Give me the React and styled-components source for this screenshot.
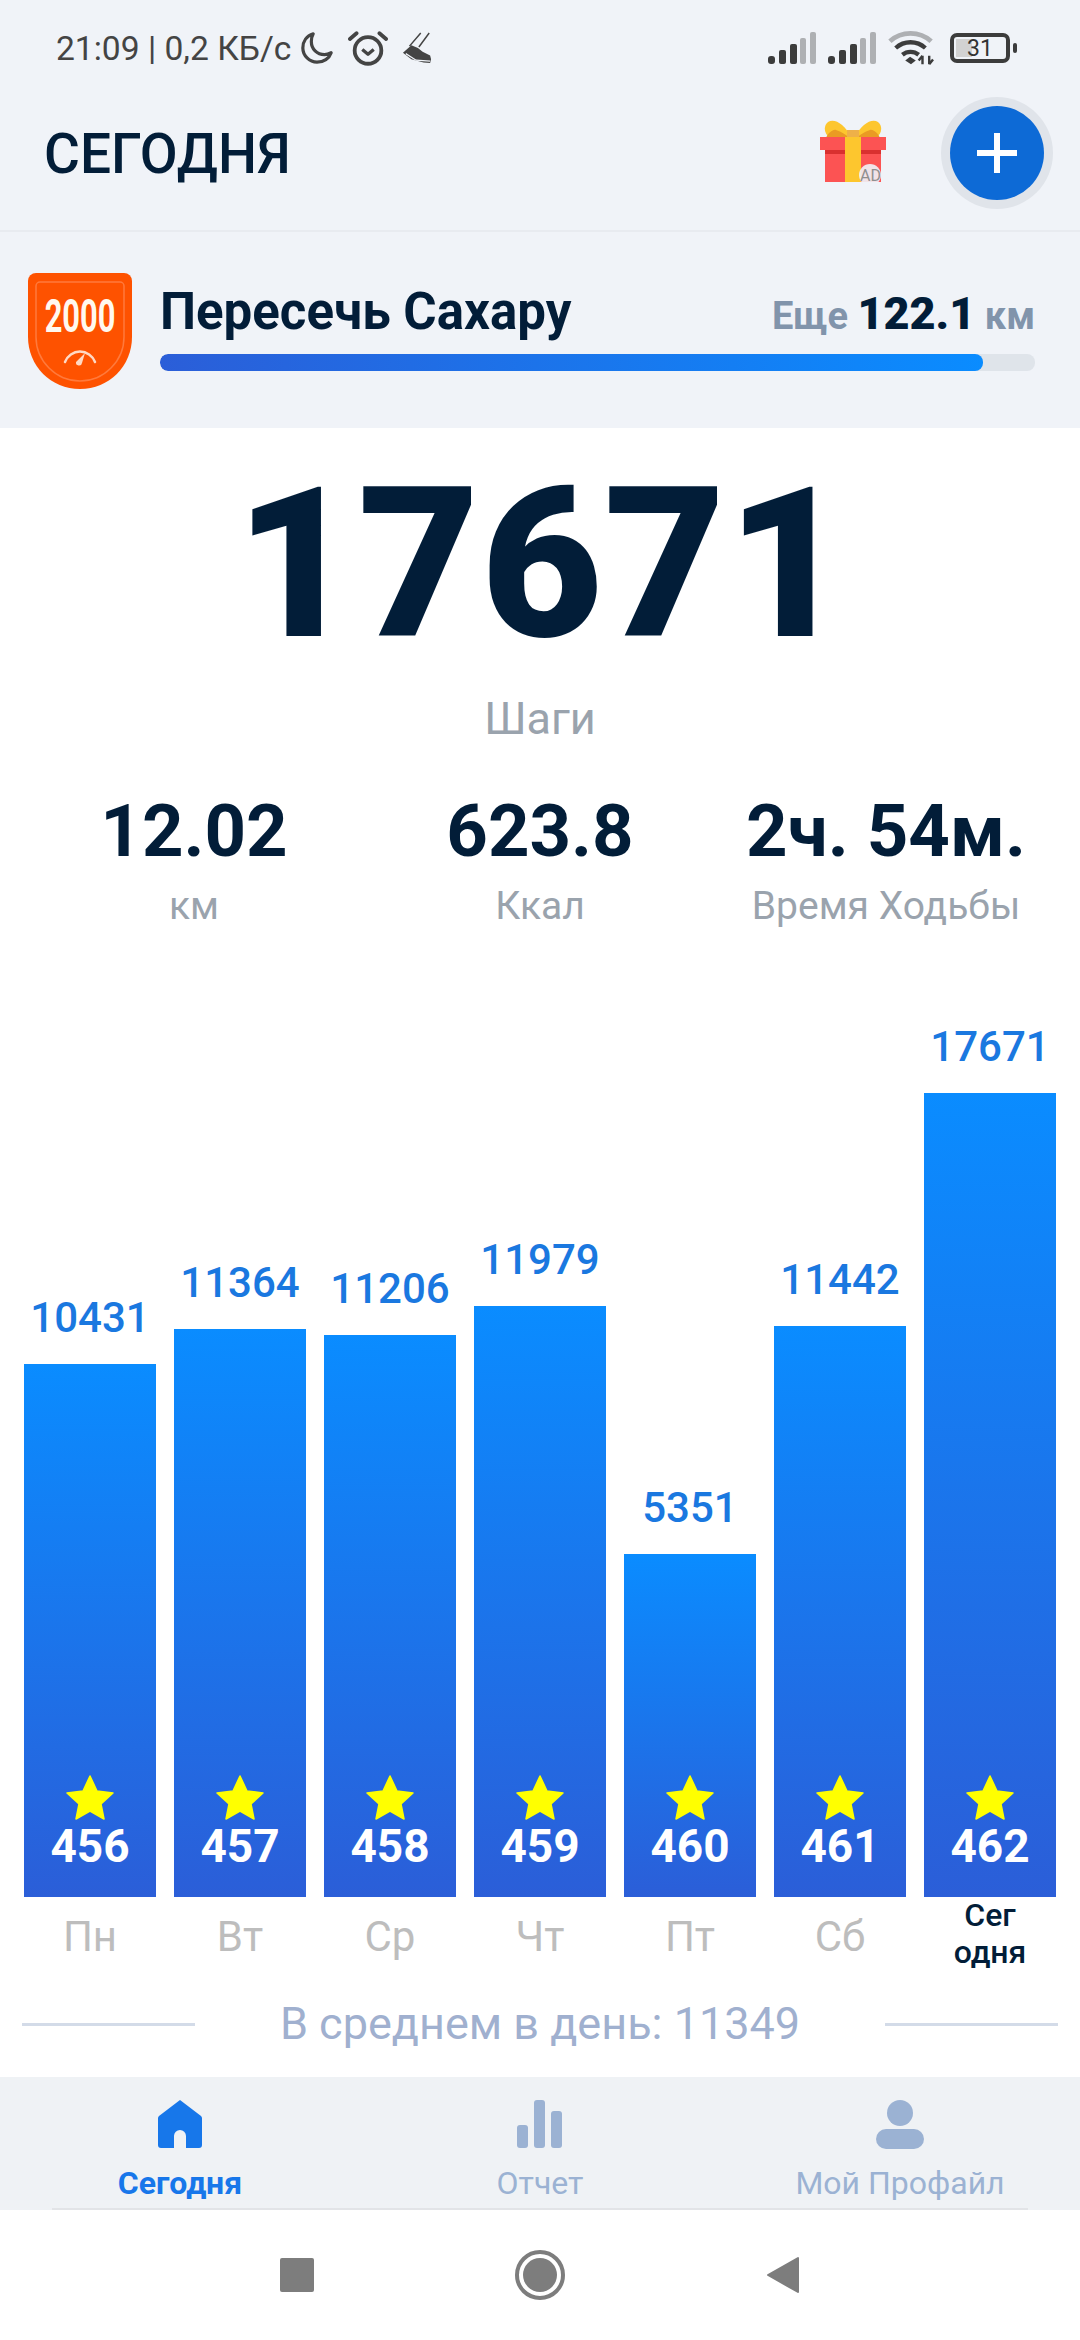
import React from "react";
import styled, { createGlobalStyle } from "styled-components";

const GlobalStyle = createGlobalStyle`
  html, body {
    margin: 0;
    padding: 0;
    background: #fff;
  }
  * {
    box-sizing: border-box;
  }
`;

const Screen = styled.div`
  width: 1080px;
  height: 2340px;
  display: flex;
  flex-direction: column;
  overflow: hidden;
  font-family: Roboto, "Noto Sans", sans-serif;
  background: #fff;
`;

const TopArea = styled.div`
  height: 232px;
  background: #f0f3f8;
  border-bottom: 2px solid #e8ebf0;
`;

const StatusBar = styled.div`
  height: 96px;
  padding: 0 62px 0 56px;
  display: flex;
  align-items: center;
  justify-content: space-between;
  color: #444;
`;

const StatusLeft = styled.div`
  display: flex;
  align-items: center;
  gap: 14px;
  font-size: 33.6px;

  span {
    margin-right: -5px;
  }
`;

const StatusRight = styled.div`
  display: flex;
  align-items: center;
  gap: 12px;
`;

const Battery = styled.div`
  position: relative;
  width: 60px;
  height: 30px;
  margin-left: 4px;
  margin-right: 8px;
  border: 4px solid #3c3c3c;
  border-radius: 7px;
  display: flex;
  align-items: center;
  justify-content: center;
  font-size: 23px;
  color: #333;

  &::before {
    content: "";
    position: absolute;
    left: 2px;
    top: 2px;
    bottom: 2px;
    width: 31%;
    background: #d2d2d2;
  }

  &::after {
    content: "";
    position: absolute;
    right: -11px;
    top: 6px;
    width: 4px;
    height: 10px;
    border-radius: 2px;
    background: #3c3c3c;
  }

  span {
    position: relative;
  }
`;

const Header = styled.header`
  height: 114px;
  padding: 0 36px 0 44px;
  display: flex;
  align-items: center;
`;

const HeaderTitle = styled.h1`
  flex: 1;
  margin: 0;
  padding-top: 2px;
  font-size: 55px;
  font-weight: 500;
  color: #021d38;
`;

const GiftIcon = styled.svg`
  flex: none;
  margin-top: 2px;
`;

const AddButton = styled.button`
  width: 94px;
  height: 94px;
  margin-left: 64px;
  border: none;
  border-radius: 50%;
  padding: 0;
  background: #0d6ad6;
  box-shadow: 0 0 0 9px #e0e4ea;
  display: flex;
  align-items: center;
  justify-content: center;
`;

const Banner = styled.section`
  height: 196px;
  background: #f0f3f8;
  padding: 0 45px 0 28px;
  display: flex;
  align-items: center;
  gap: 28px;
`;

const BadgeWrap = styled.div`
  flex: none;
  width: 104px;
  height: 116px;
  margin-top: 2px;

  svg {
    display: block;
  }
`;

const BannerBody = styled.div`
  flex: 1;
  display: flex;
  flex-direction: column;
  gap: 11px;
  padding-bottom: 9px;
`;

const BannerRow = styled.div`
  display: flex;
  align-items: baseline;
  justify-content: space-between;
  height: 62px;
`;

const ChallengeName = styled.div`
  font-size: 51px;
  font-weight: 700;
  color: #021d38;
  line-height: 62px;
`;

const Remaining = styled.div`
  font-size: 38px;
  font-weight: 700;
  color: #8194ab;

  b {
    font-size: 45px;
    color: #021d38;
  }
`;

const ProgressTrack = styled.div`
  height: 17px;
  border-radius: 8px;
  background: #dfe4ea;
  overflow: hidden;
`;

const ProgressFill = styled.div`
  height: 100%;
  border-radius: 8px;
  background: linear-gradient(90deg, #2b5ed8, #0a8cff);
`;

const Main = styled.main`
  flex: 1;
  display: flex;
  flex-direction: column;
  align-items: stretch;
`;

const TotalSteps = styled.div`
  margin-top: 29px;
  padding-left: 5px;
  font-size: 210px;
  line-height: 215px;
  font-weight: 900;
  letter-spacing: 1.200px;
  color: #021d38;
  text-align: center;
`;

const StepsLabel = styled.div`
  margin-top: 22px;
  font-size: 45px;
  line-height: 50px;
  color: #9aa3ad;
  text-align: center;
`;

const Stats = styled.div`
  margin-top: 47px;
  padding: 0 21px;
  display: grid;
  grid-template-columns: repeat(3, 1fr);
`;

const Stat = styled.div`
  display: flex;
  flex-direction: column;
  align-items: center;
`;

const StatValue = styled.div`
  font-size: 72.500px;
  line-height: 82px;
  font-weight: 700;
  color: #021d38;
  white-space: nowrap;
`;

const StatLabel = styled.div`
  margin-top: 12px;
  font-size: 39px;
  line-height: 42px;
  color: #9aa3ad;
  white-space: nowrap;
`;

const Chart = styled.div`
  margin-top: 96px;
  padding: 0 24px;
  display: grid;
  grid-template-columns: repeat(7, 132px);
  justify-content: space-between;
  align-items: end;
`;

const Column = styled.div`
  display: flex;
  flex-direction: column;
  align-items: stretch;
`;

const BarValue = styled.div`
  font-size: 42px;
  line-height: 48px;
  margin-bottom: 22px;
  font-weight: 500;
  color: #1a78e0;
  text-align: center;
`;

const Bar = styled.div`
  background: linear-gradient(180deg, #0a8cff 0%, #2b5ed8 100%);
  display: flex;
  flex-direction: column;
  justify-content: flex-end;
  align-items: center;
  padding-bottom: 29px;
`;

const Level = styled.div`
  margin-top: 3px;
  font-size: 46px;
  line-height: 44px;
  font-weight: 700;
  color: #fff;
`;

const DayLabel = styled.div`
  height: 78px;
  padding-top: ${(p) => (p.$today ? "0" : "16px")};
  font-size: ${(p) => (p.$today ? "32px" : "42px")};
  line-height: ${(p) => (p.$today ? "37px" : "48px")};
  font-weight: ${(p) => (p.$today ? 500 : 400)};
  color: ${(p) => (p.$today ? "#021d38" : "#bdbdbd")};
  text-align: center;
`;

const Average = styled.div`
  margin-top: 24px;
  padding: 0 22px;
  display: flex;
  align-items: center;
  justify-content: space-between;
`;

const AverageLine = styled.div`
  width: 173px;
  height: 3px;
  background: #d3dbe8;
`;

const AverageText = styled.div`
  font-size: 45px;
  line-height: 50px;
  color: #a0b0cf;
`;

const TabBar = styled.nav`
  height: 133px;
  background: #eff2f5;
  display: grid;
  grid-template-columns: repeat(3, 1fr);
  position: relative;

  &::after {
    content: "";
    position: absolute;
    left: 52px;
    right: 52px;
    bottom: 0;
    height: 2px;
    background: #e2e4e7;
  }
`;

const Tab = styled.div`
  display: flex;
  flex-direction: column;
  align-items: center;
  padding-top: 22px;
  color: ${(p) => (p.$active ? "#1777ea" : "#9bb2d3")};
`;

const TabIcon = styled.svg`
  width: 50px;
  height: 50px;
  fill: currentColor;
`;

const TabLabel = styled.div`
  margin-top: 16px;
  font-size: 32px;
  line-height: 36px;
  font-weight: ${(p) => (p.$active ? 700 : 400)};
`;

const SystemNav = styled.div`
  height: 130px;
  background: #fff;
  display: grid;
  grid-template-columns: repeat(3, 1fr);
  padding: 0 176px;
  align-items: center;
  justify-items: center;
`;

const days = [
  { day: "Пн", steps: 10431, level: 456 },
  { day: "Вт", steps: 11364, level: 457 },
  { day: "Ср", steps: 11206, level: 458 },
  { day: "Чт", steps: 11979, level: 459 },
  { day: "Пт", steps: 5351, level: 460 },
  { day: "Сб", steps: 11442, level: 461 },
  { day: ["Сег", "одня"], steps: 17671, level: 462, today: true },
];

// bars keep a minimum height so the star and level always fit
const barHeight = (steps) => 143 + steps * 0.03742;

const Moon = () => (
  <svg width="34" height="36" viewBox="0 0 36 36" fill="none">
    <path
      d="M14 3C7 5 3 11 3 18c0 8 7 15 15 15 7 0 13-4 15-10-2 1-4 2-7 2-8 0-14-6-14-14 0-3 .6-5.500 2-8z"
      stroke="#444"
      strokeWidth="3.400"
      strokeLinejoin="round"
    />
  </svg>
);

const AlarmClock = () => (
  <svg width="40" height="37" viewBox="0 0 42 38" fill="none" stroke="#444">
    <circle cx="21" cy="21" r="14" strokeWidth="4" />
    <path d="M15 20l6 5 6-5" strokeWidth="3.500" strokeLinejoin="round" />
    <path d="M2 9l7-6M40 9l-7-6" strokeWidth="4" strokeLinecap="round" />
  </svg>
);

const Shoe = () => (
  <svg width="30" height="32" viewBox="0 0 32 34" fill="none">
    <path d="M20 1L8 15M29 1L18 16" stroke="#444" strokeWidth="1.600" />
    <path d="M1 22l9-8 7 3 5 4 8 4 1 4-1 4-7-.500L10 29z" fill="#444" />
    <path d="M4 23l11 7 15 1" stroke="#f0f3f8" strokeWidth="1.300" />
  </svg>
);

const Signal = () => (
  <svg width="48" height="32" viewBox="0 0 48 32">
    <rect x="0" y="24" width="7" height="8" rx="3" fill="#3c3c3c" />
    <rect x="11" y="18" width="7" height="14" rx="2" fill="#3c3c3c" />
    <rect x="22" y="12" width="7" height="20" rx="2" fill="#3c3c3c" />
    <rect x="32" y="6" width="6" height="26" rx="2" fill="#aeb0b3" />
    <rect x="42" y="0" width="6" height="32" rx="2" fill="#aeb0b3" />
  </svg>
);

const Wifi = () => (
  <svg width="46" height="36" viewBox="0 0 48 36" fill="none">
    <path d="M2 11C14 0 33 0 45 11" stroke="#aeb0b3" strokeWidth="5" />
    <path d="M8 18c9-8 22-8 31 0" stroke="#3c3c3c" strokeWidth="4.500" />
    <path d="M15 25c5-4 12-4 17 0" stroke="#3c3c3c" strokeWidth="4.500" />
    <path d="M18 31l5-4 6 4-5 4z" fill="#3c3c3c" />
    <path d="M36 26v9M36 26l-4 5M43 35v-9M43 35l4-5" stroke="#3c3c3c" strokeWidth="2.500" />
  </svg>
);

const Gift = () => (
  <GiftIcon width="66" height="68" viewBox="0 0 66 68">
    <path d="M32 18C24 3 14-2 8 2c-5 4-4 12 2 16z" fill="#fdc62e" />
    <path d="M34 18C42 3 52-2 58 2c5 4 4 12-2 16z" fill="#fdc62e" />
    <path d="M6 18c2-5 7-9 10-8 6 2 12 6 16 10H6zM60 18c-2-5-7-9-10-8-6 2-12 6-16 10h26z" fill="#ea9b23" />
    <rect x="27" y="10" width="12" height="9" fill="#eeb049" />
    <rect x="5" y="30" width="56" height="32" fill="#fc5353" />
    <rect x="5" y="30" width="56" height="4" fill="#d9302f" />
    <rect x="0" y="17" width="66" height="13" fill="#fc5353" />
    <rect x="25" y="17" width="16" height="45" fill="#fdc62e" />
    <circle cx="50" cy="55" r="11" fill="#f0f3f8" opacity="0.900" />
    <text x="40" y="61" fontSize="16" fontFamily="Roboto, sans-serif" fill="#8f8f8f">
      AD
    </text>
  </GiftIcon>
);

const Badge = () => (
  <svg width="104" height="116" viewBox="0 0 104 116">
    <path
      d="M8 0h88a8 8 0 0 1 8 8v56c0 29-23 52-52 52S0 93 0 64V8a8 8 0 0 1 8-8z"
      fill="#fe5200"
    />
    <path
      d="M12 9h80a4 4 0 0 1 4 4v51c0 24-20 44-44 44S8 88 8 64V13a4 4 0 0 1 4-4z"
      fill="none"
      stroke="#ff7a3c"
      strokeWidth="1.500"
    />
    <text
      transform="translate(52 59) scale(0.67 1)"
      textAnchor="middle"
      fontFamily="Roboto, sans-serif"
      fontWeight="700"
      fontSize="46"
      fill="#fff9ef"
    >
      2000
    </text>
    <path d="M37 89a16 16 0 0 1 30 0" fill="none" stroke="#ffd9c4" strokeWidth="2.500" strokeLinecap="round" />
    <path d="M48 89l9-9-3 10a3 3 0 0 1-6-1z" fill="#ffd9c4" />
  </svg>
);

const Star = () => (
  <svg width="48" height="46" viewBox="0 0 48 46">
    <path
      d="M24 1l7 15 16 2-12 11 3 15-14-8-14 8 3-15L1 18l16-2z"
      fill="#ffff00"
      stroke="#ffff00"
      strokeWidth="1.500"
      strokeLinejoin="round"
    />
  </svg>
);

const App = () => {
  return (
    <>
      <GlobalStyle />
      <Screen>
        <TopArea>
          <StatusBar>
            <StatusLeft>
              <span>21:09 | 0,2 КБ/с</span>
              <Moon />
              <AlarmClock />
              <Shoe />
            </StatusLeft>
            <StatusRight>
              <Signal />
              <Signal />
              <Wifi />
              <Battery>
                <span>31</span>
              </Battery>
            </StatusRight>
          </StatusBar>
          <Header>
            <HeaderTitle>СЕГОДНЯ</HeaderTitle>
            <Gift />
            <AddButton>
              <svg width="40" height="40" viewBox="0 0 40 40">
                <path d="M20 0v40M0 20h40" stroke="#fff" strokeWidth="6" />
              </svg>
            </AddButton>
          </Header>
        </TopArea>

        <Banner>
          <BadgeWrap>
            <Badge />
          </BadgeWrap>
          <BannerBody>
            <BannerRow>
              <ChallengeName>Пересечь Сахару</ChallengeName>
              <Remaining>
                Еще <b>122.1</b> км
              </Remaining>
            </BannerRow>
            <ProgressTrack>
              <ProgressFill style={{ width: "94%" }} />
            </ProgressTrack>
          </BannerBody>
        </Banner>

        <Main>
          <TotalSteps>17671</TotalSteps>
          <StepsLabel>Шаги</StepsLabel>
          <Stats>
            <Stat>
              <StatValue>12.02</StatValue>
              <StatLabel>км</StatLabel>
            </Stat>
            <Stat>
              <StatValue>623.8</StatValue>
              <StatLabel>Ккал</StatLabel>
            </Stat>
            <Stat>
              <StatValue>2ч. 54м.</StatValue>
              <StatLabel>Время Ходьбы</StatLabel>
            </Stat>
          </Stats>

          <Chart>
            {days.map((d) => (
              <Column key={d.level}>
                <BarValue>{d.steps}</BarValue>
                <Bar style={{ height: barHeight(d.steps) }}>
                  <Star />
                  <Level>{d.level}</Level>
                </Bar>
                <DayLabel $today={d.today}>
                  {d.today ? (
                    <>
                      {d.day[0]}
                      <br />
                      {d.day[1]}
                    </>
                  ) : (
                    d.day
                  )}
                </DayLabel>
              </Column>
            ))}
          </Chart>

          <Average>
            <AverageLine />
            <AverageText>В среднем в день: 11349</AverageText>
            <AverageLine />
          </Average>
        </Main>

        <TabBar>
          <Tab $active>
            <TabIcon viewBox="0 0 50 50">
              <path d="M25 1l21 16a3 3 0 0 1 1 2v27a3 3 0 0 1-3 3H31V37a6 6 0 0 0-12 0v12H6a3 3 0 0 1-3-3V19a3 3 0 0 1 1-2z" />
            </TabIcon>
            <TabLabel $active>Сегодня</TabLabel>
          </Tab>
          <Tab>
            <TabIcon viewBox="0 0 50 50">
              <rect x="2" y="26" width="11" height="23" rx="3" />
              <rect x="19" y="1" width="11" height="48" rx="3" />
              <rect x="36" y="12" width="11" height="37" rx="3" />
            </TabIcon>
            <TabLabel>Отчет</TabLabel>
          </Tab>
          <Tab>
            <TabIcon viewBox="0 0 50 50">
              <circle cx="25" cy="14" r="13" />
              <rect x="1" y="30" width="48" height="20" rx="10" />
            </TabIcon>
            <TabLabel>Мой Профайл</TabLabel>
          </Tab>
        </TabBar>

        <SystemNav>
          <svg width="34" height="34" viewBox="0 0 34 34">
            <rect x="0" y="0" width="34" height="34" rx="2" fill="#7d7d7d" />
          </svg>
          <svg width="50" height="50" viewBox="0 0 50 50">
            <circle cx="25" cy="25" r="23" fill="none" stroke="#7d7d7d" strokeWidth="4" />
            <circle cx="25" cy="25" r="17" fill="#7d7d7d" />
          </svg>
          <svg width="32" height="38" viewBox="0 0 32 38">
            <path d="M31 2v34L1 19z" fill="#7d7d7d" stroke="#7d7d7d" strokeWidth="2" strokeLinejoin="round" />
          </svg>
        </SystemNav>
      </Screen>
    </>
  );
};

export default App;
